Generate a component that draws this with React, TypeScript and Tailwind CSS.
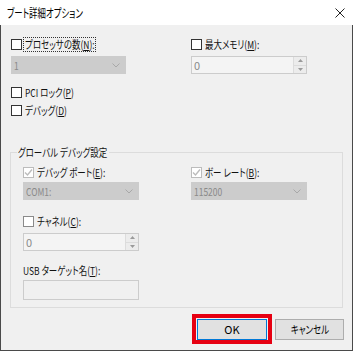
import React from "react";

const font = "font-['Noto_Sans_CJK_JP','Noto_Sans',sans-serif] [font-feature-settings:'palt']";

function T({ children, center = false }: { children: React.ReactNode; center?: boolean }) {
  return (
    <span className={`inline-block whitespace-nowrap scale-x-[0.77] ${center ? "origin-center" : "origin-left"}`}>
      {children}
    </span>
  );
}

function Box({ checked = false, disabled = false, light = false }: { checked?: boolean; disabled?: boolean; light?: boolean }) {
  const border = disabled ? "border-[#bcbcbc]" : light ? "border-[#8a8a8a]" : "border-[#333333]";
  return (
    <span className={`relative inline-flex w-[11px] h-[11px] shrink-0 border ${border} bg-white items-center justify-center`}>
      {checked && (
        <svg width="9" height="9" viewBox="0 0 9 9" className="block">
          <path d="M1 4.5 L3.5 7 L8 1.5" fill="none" stroke="#bcbcbc" strokeWidth="1.4" />
        </svg>
      )}
    </span>
  );
}

function Check({ children, checked, disabled, light, focusWidth }: { children: React.ReactNode; checked?: boolean; disabled?: boolean; light?: boolean; focusWidth?: string }) {
  return (
    <div className="flex items-center h-[14px] gap-[1px]">
      <Box checked={checked} disabled={disabled} light={light} />
      <span
        className={`leading-[13px] text-[11px] text-[#111] px-[1px] border ${
          focusWidth ? `border-dotted border-[#333] ${focusWidth}` : "border-transparent"
        }`}
      >
        <T>{children}</T>
      </span>
    </div>
  );
}

function Combo({ value }: { value: string }) {
  return (
    <div className="h-[18px] bg-[#cccccc] border border-[#cccccc] flex items-center justify-between pl-[2px] pr-[5px]">
      <span className="text-[11px] text-[#8a8a8a] leading-none">
        <T>{value}</T>
      </span>
      <svg width="8" height="5" viewBox="0 0 8 5">
        <path d="M0.5 0.5 L4 4 L7.5 0.5" fill="none" stroke="#a8a8a8" strokeWidth="1" />
      </svg>
    </div>
  );
}

function Spin({ value }: { value: string }) {
  return (
    <div className="h-[18px] bg-[#f4f4f4] border border-[#cccccc] flex items-stretch">
      <span className="flex-1 flex items-center pl-[2px] text-[11px] text-[#8a8a8a] leading-none">{value}</span>
      <div className="w-[13px] flex flex-col border-l border-[#dcdcdc]">
        <div className="flex-1 flex items-center justify-center border-b border-[#dcdcdc] bg-[#ececec]">
          <svg width="5" height="3" viewBox="0 0 5 3"><path d="M0 3 L2.5 0 L5 3 Z" fill="#9a9a9a" /></svg>
        </div>
        <div className="flex-1 flex items-center justify-center bg-[#ececec]">
          <svg width="5" height="3" viewBox="0 0 5 3"><path d="M0 0 L2.5 3 L5 0 Z" fill="#9a9a9a" /></svg>
        </div>
      </div>
    </div>
  );
}

export default function App() {
  return (
    <div className={`w-[353px] h-[351px] flex flex-col ${font}`}>
      <div className="h-[25px] bg-white flex items-center justify-between pl-[7px] pr-[8px]">
        <span className="text-[12px] text-black leading-none">
          <span className="inline-block whitespace-nowrap scale-x-[0.7] origin-left">ブート詳細オプション</span>
        </span>
        <svg width="10" height="10" viewBox="0 0 10 10">
          <path d="M0.5 0.5 L9.5 9.5 M9.5 0.5 L0.5 9.5" stroke="#222" strokeWidth="1" />
        </svg>
      </div>
      <div className="flex-1 bg-[#f0f0f0] border-x border-b border-[#4a4a4a] flex flex-col">
        <div className="grid grid-cols-[115px_116px] gap-x-[65px] pl-[10px] mt-[12px]">
          <Check focusWidth="w-[73px]">
            プロセッサの数(<u>N</u>):
          </Check>
          <Check>
            最大メモリ(<u>M</u>):
          </Check>
          <div className="mt-[5px]"><Combo value="1" /></div>
          <div className="mt-[5px]"><Spin value="0" /></div>
        </div>
        <div className="pl-[10px] mt-[11px] flex flex-col gap-[4px]">
          <Check>
            PCI ロック(<u>P</u>)
          </Check>
          <Check>
            デバッグ(<u>D</u>)
          </Check>
        </div>
        <div className="ml-[9px] w-[333px] mt-[35px] border border-[#dcdcdc] pl-[12px] pb-[7px] flex flex-col">
          <span className="-mt-[8px] -ml-[6px] w-[92px] bg-[#f0f0f0] px-[1px] h-[14px] leading-[14px] text-[11px] text-[#111]">
            <T>グローバル デバッグ設定</T>
          </span>
          <div className="grid grid-cols-[116px_116px] gap-x-[52px] mt-[6px]">
            <Check checked disabled>
              デバッグ ポート(<u>E</u>):
            </Check>
            <Check checked disabled>
              ボー レート(<u>B</u>):
            </Check>
            <div className="mt-[3px]"><Combo value="COM1:" /></div>
            <div className="mt-[3px]"><Combo value="115200" /></div>
          </div>
          <div className="w-[116px] flex flex-col">
            <div className="mt-[14px]">
              <Check light>
                チャネル(<u>C</u>):
              </Check>
            </div>
            <div className="mt-[5px]"><Spin value="0" /></div>
            <div className="mt-[12px] h-[14px] flex items-center text-[11px] text-[#111] leading-none">
              <T>
                USB ターゲット名(<u>T</u>):
              </T>
            </div>
            <div className="mt-[3px] h-[20px] bg-[#f0f0f0] border border-[#cccccc]" />
          </div>
        </div>
        <div className="mt-[11px] flex justify-end gap-[8px] pr-[8px]">
          <div className="relative">
            <div className="absolute -top-[5px] -bottom-[4px] -left-[5px] -right-[5px] border-[4px] border-[#e60012]" />
            <button className="relative w-[70px] h-[21px] bg-[#e1e1e1] border border-[#0078d7] outline outline-1 -outline-offset-2 outline-[#e1e1e1] text-[11px] text-black leading-none flex items-center justify-center">
              OK
            </button>
          </div>
          <button className="w-[69px] h-[21px] bg-[#e1e1e1] border border-[#adadad] text-[11px] text-black leading-none flex items-center justify-center">
            <T center>キャンセル</T>
          </button>
        </div>
      </div>
    </div>
  );
}
